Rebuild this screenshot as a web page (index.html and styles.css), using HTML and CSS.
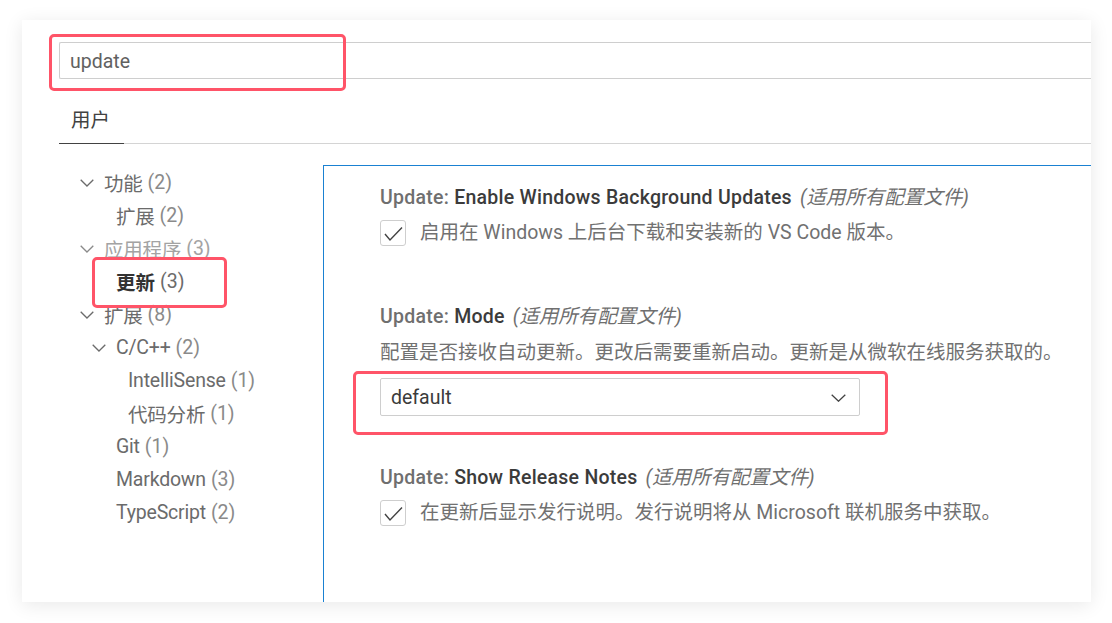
FILE: index.html
```html
<!DOCTYPE html>
<html lang="zh-CN">
<head>
<meta charset="utf-8">
<title>设置 - update</title>
<link rel="stylesheet" href="styles.css">
</head>
<body>
<div class="card">
  <div class="search-row">
    <div class="search">update</div>
  </div>
  <div class="tabs">
    <div class="tab active">用户</div>
  </div>
  <div class="body">
    <nav class="tree">
      <div class="row lvl0"><span class="twistie"><svg viewBox="0 0 14 8" width="14" height="8"><polyline points="0.7,0.7 7,7 13.3,0.7"/></svg></span><span class="label">功能</span><span class="count">(2)</span></div>
      <div class="row lvl1"><span class="twistie"></span><span class="label">扩展</span><span class="count">(2)</span></div>
      <div class="row lvl0 dim"><span class="twistie"><svg viewBox="0 0 14 8" width="14" height="8"><polyline points="0.7,0.7 7,7 13.3,0.7"/></svg></span><span class="label">应用程序</span><span class="count">(3)</span></div>
      <div class="row lvl1 selected"><span class="twistie"></span><span class="label">更新</span><span class="count">(3)</span></div>
      <div class="row lvl0"><span class="twistie"><svg viewBox="0 0 14 8" width="14" height="8"><polyline points="0.7,0.7 7,7 13.3,0.7"/></svg></span><span class="label">扩展</span><span class="count">(8)</span></div>
      <div class="row lvl1"><span class="twistie"><svg viewBox="0 0 14 8" width="14" height="8"><polyline points="0.7,0.7 7,7 13.3,0.7"/></svg></span><span class="label">C/C++</span><span class="count">(2)</span></div>
      <div class="row lvl2"><span class="twistie"></span><span class="label">IntelliSense</span><span class="count">(1)</span></div>
      <div class="row lvl2"><span class="twistie"></span><span class="label">代码分析</span><span class="count">(1)</span></div>
      <div class="row lvl1"><span class="twistie"></span><span class="label">Git</span><span class="count">(1)</span></div>
      <div class="row lvl1"><span class="twistie"></span><span class="label">Markdown</span><span class="count">(3)</span></div>
      <div class="row lvl1"><span class="twistie"></span><span class="label">TypeScript</span><span class="count">(2)</span></div>
    </nav>
    <section class="panel">
      <div class="setting">
        <div class="title"><span class="cat">Update: </span><span class="name">Enable Windows Background Updates</span><span class="scope">(适用所有配置文件)</span></div>
        <div class="check-row">
          <span class="checkbox"><svg viewBox="0 0 26 26" width="26" height="26"><polyline points="5,14 10,20 22,7.5"/></svg></span>
          <span class="desc">启用在 Windows 上后台下载和安装新的 VS Code 版本。</span>
        </div>
      </div>
      <div class="setting">
        <div class="title"><span class="cat">Update: </span><span class="name">Mode</span><span class="scope">(适用所有配置文件)</span></div>
        <div class="desc block">配置是否接收自动更新。更改后需要重新启动。更新是从微软在线服务获取的。</div>
        <div class="select">
          <span>default</span>
          <svg viewBox="0 0 15 8" width="15" height="8"><polyline points="0.7,0.7 7.5,7.2 14.3,0.7"/></svg>
        </div>
      </div>
      <div class="setting">
        <div class="title"><span class="cat">Update: </span><span class="name">Show Release Notes</span><span class="scope">(适用所有配置文件)</span></div>
        <div class="check-row">
          <span class="checkbox"><svg viewBox="0 0 26 26" width="26" height="26"><polyline points="5,14 10,20 22,7.5"/></svg></span>
          <span class="desc">在更新后显示发行说明。发行说明将从 Microsoft 联机服务中获取。</span>
        </div>
      </div>
    </section>
  </div>
  <div class="mark mark-search"></div>
  <div class="mark mark-tree"></div>
  <div class="mark mark-select"></div>
</div>
</body>
</html>
```
FILE: styles.css
```css
html, body {
  margin: 0;
  padding: 0;
  background: #ffffff;
}

body {
  font-family: Roboto, "Noto Sans CJK SC", sans-serif;
  font-size: 19.5px;
  color: #616161;
  width: 1112px;
  height: 623px;
  overflow: hidden;
}

.card {
  position: relative;
  margin: 20px 0 0 22px;
  width: 1069px;
  height: 582px;
  background: #ffffff;
  box-shadow: 0 3px 18px rgba(0, 0, 0, 0.09);
  overflow: hidden;
  display: flex;
  flex-direction: column;
}

.search-row {
  padding: 22px 0 0 37px;
}

.search {
  box-sizing: border-box;
  height: 37px;
  border: 1px solid #cecece;
  border-right: none;
  border-radius: 2px 0 0 2px;
  padding: 2px 0 0 10px;
  line-height: 33px;
  color: #616161;
}

.tabs {
  margin-left: 37px;
  height: 64px;
  border-bottom: 1px solid #d4d4d4;
  display: flex;
  align-items: flex-end;
}

.tab {
  height: 44px;
  line-height: 44px;
  padding: 0 14px 0 12px;
  color: #424242;
  margin-bottom: -1px;
}

.tab.active {
  border-bottom: 1px solid #424242;
}

.body {
  flex: 1;
  margin-top: 21px;
  padding-left: 37px;
  display: flex;
  min-height: 0;
}

.tree {
  width: 264px;
  flex: none;
  padding-top: 1px;
}

.row {
  height: 33px;
  display: flex;
  align-items: center;
  white-space: nowrap;
  color: #6b6b6b;
}

.row.lvl0 { padding-left: 21px; }
.row.lvl1 { padding-left: 33px; }
.row.lvl2 { padding-left: 45px; }

.twistie {
  width: 24px;
  flex: none;
  display: flex;
  align-items: center;
}

.twistie svg {
  fill: none;
  stroke: #6b6b6b;
  stroke-width: 1.3;
}

.label {
  letter-spacing: -0.2px;
}

.count {
  margin-left: 5px;
  color: #8a8a8a;
}

.row.dim .label,
.row.dim .count {
  color: #a3a3a3;
}

.row.dim .twistie svg {
  stroke: #8a8a8a;
}

.row.selected .label {
  font-weight: 700;
  color: #333333;
  letter-spacing: 0;
}

.row.selected .count {
  color: #6b6b6b;
}

.panel {
  flex: 1;
  border-top: 1px solid #1a81d2;
  border-left: 1px solid #1a81d2;
  padding: 19px 0 0 56px;
  white-space: nowrap;
}

.setting {
  padding-bottom: 49px;
}

.title {
  line-height: 26px;
  font-weight: 500;
  letter-spacing: 0.25px;
}

.cat {
  color: #6f6f6f;
}

.name {
  color: #3b3b3b;
}

.scope {
  font-weight: 400;
  font-style: italic;
  color: #6f6f6f;
  margin-left: 8px;
  letter-spacing: 0;
}

.desc {
  line-height: 26px;
  color: #717171;
}

.desc.block {
  margin-top: 10px;
}

.check-row {
  margin-top: 9px;
  margin-bottom: 9px;
  display: flex;
  align-items: flex-start;
}

.checkbox {
  box-sizing: border-box;
  width: 26px;
  height: 26px;
  border: 1px solid #cecece;
  border-radius: 3px;
  flex: none;
  margin-right: 14px;
  position: relative;
}

.checkbox svg {
  position: absolute;
  left: -1px;
  top: -1px;
  fill: none;
  stroke: #424242;
  stroke-width: 1.4;
}

.select {
  box-sizing: border-box;
  margin-top: 12px;
  width: 480px;
  height: 38px;
  border: 1px solid #cecece;
  border-radius: 2px;
  padding: 1px 13px 0 10px;
  display: flex;
  align-items: center;
  justify-content: space-between;
  color: #3b3b3b;
}

.select svg {
  fill: none;
  stroke: #424242;
  stroke-width: 1.3;
}

.mark {
  position: absolute;
  box-sizing: border-box;
  border: 3px solid #ff5468;
  border-radius: 5px;
  pointer-events: none;
}

.mark-search {
  left: 27px;
  top: 14px;
  width: 297px;
  height: 57px;
}

.mark-tree {
  left: 70px;
  top: 237px;
  width: 135px;
  height: 51px;
}

.mark-select {
  left: 331px;
  top: 351px;
  width: 535px;
  height: 64px;
}
```
